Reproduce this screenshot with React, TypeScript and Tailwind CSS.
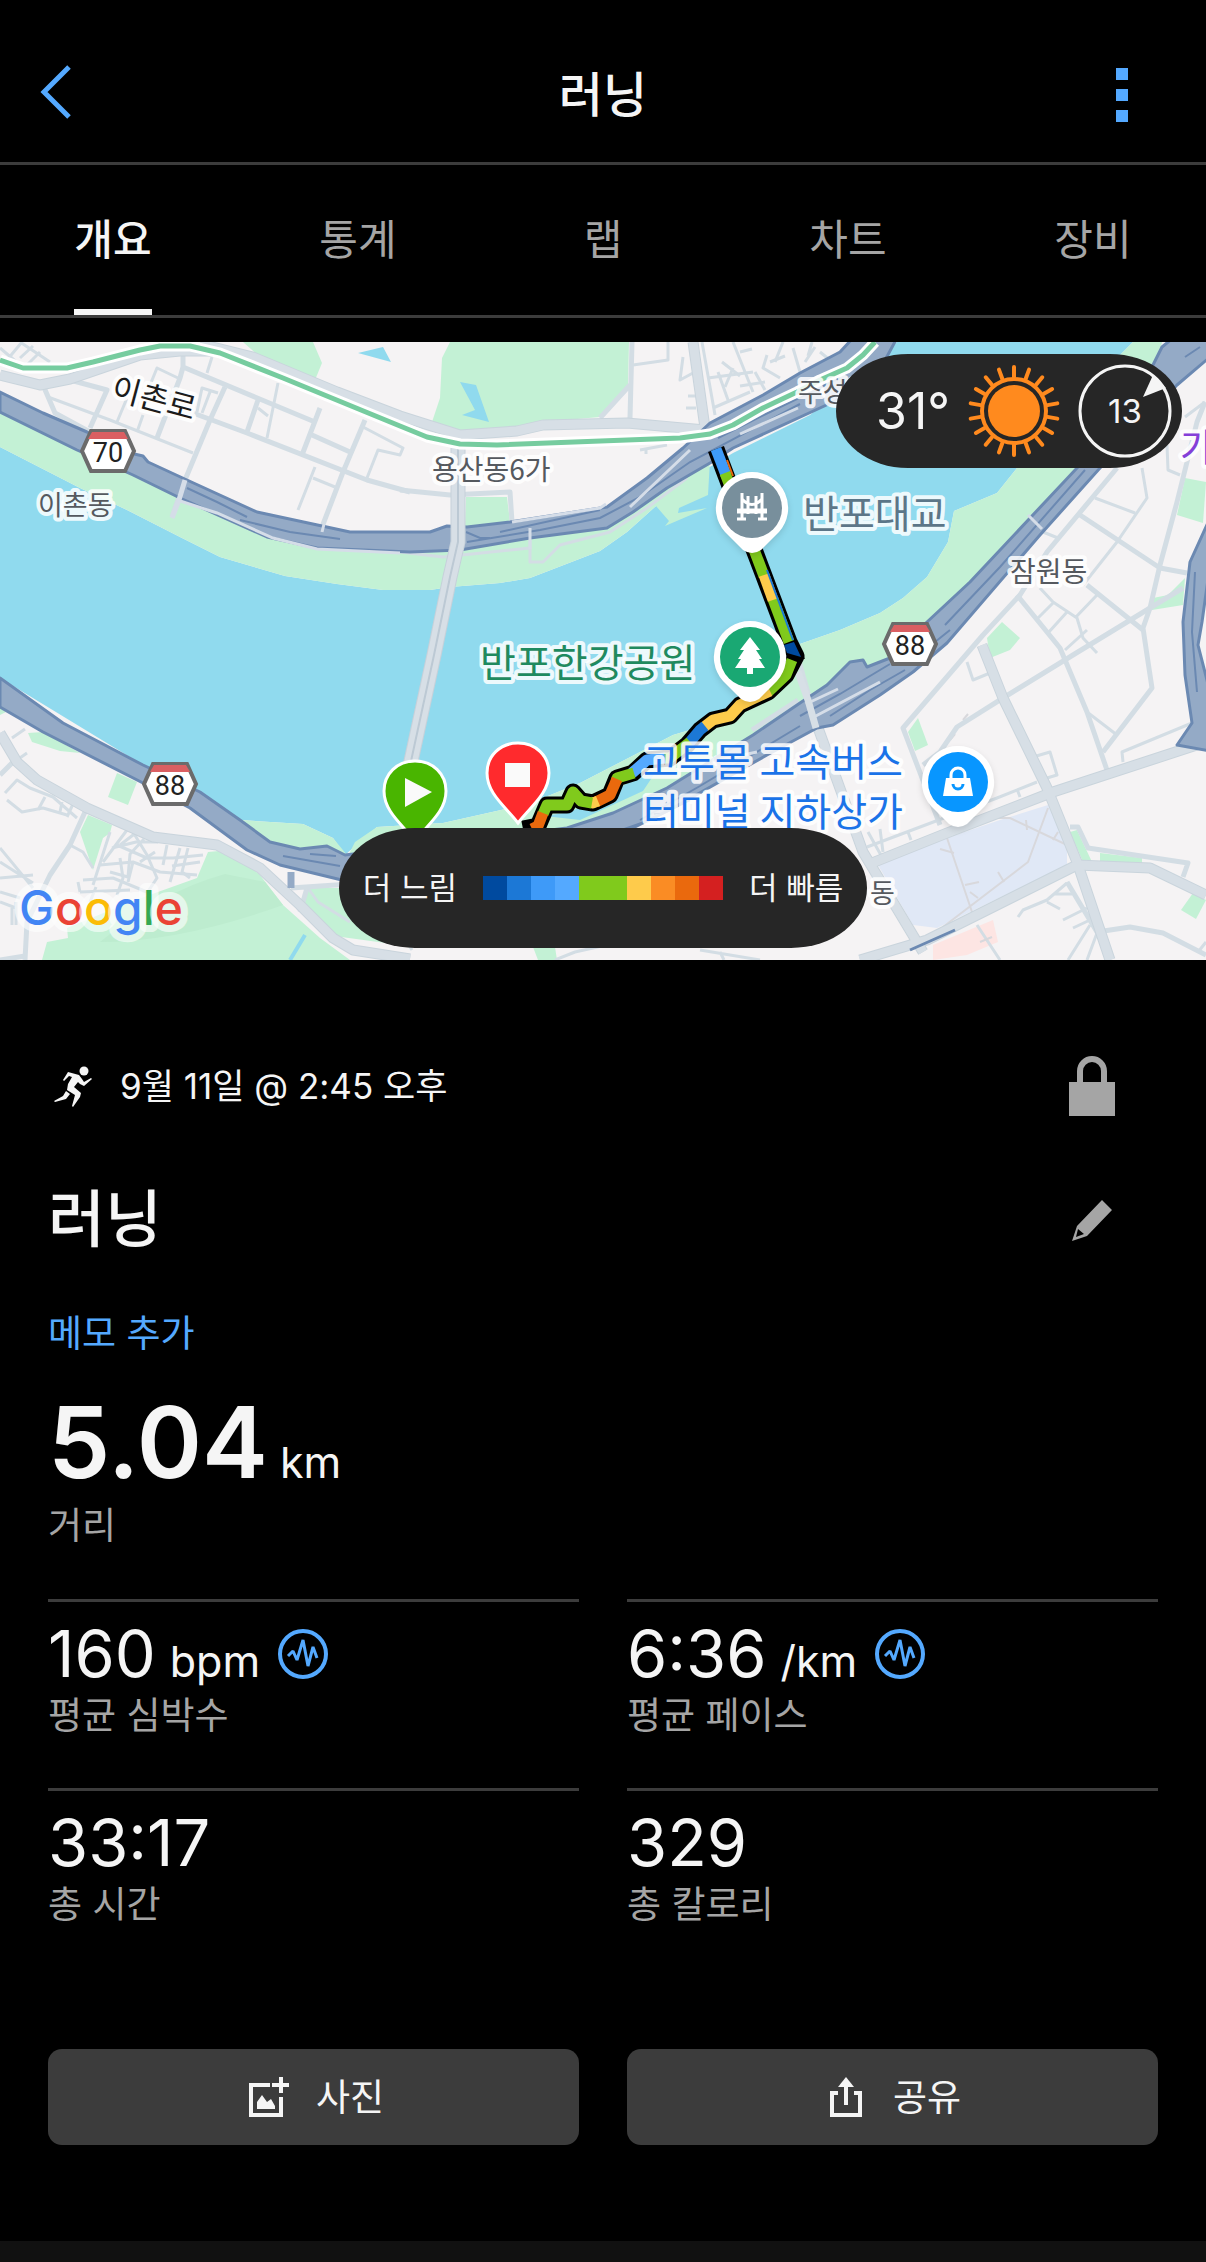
import { useState } from "react";

const TABS = ["개요", "통계", "랩", "차트", "장비"];

const PACE_COLORS = [
  "bg-[#004a9f]",
  "bg-[#1c78d6]",
  "bg-[#3e9af8]",
  "bg-[#54a9ff]",
  "bg-[#80ca1c]",
  "bg-[#80ca1c]",
  "bg-[#fecb4b]",
  "bg-[#fa8c24]",
  "bg-[#ea690d]",
  "bg-[#d42020]",
];

type Stat = {
  value: string;
  unit?: string;
  label: string;
  hasChart?: boolean;
};

const STATS: Stat[] = [
  { value: "160", unit: "bpm", label: "평균 심박수", hasChart: true },
  { value: "6:36", unit: "/km", label: "평균 페이스", hasChart: true },
  { value: "33:17", label: "총 시간" },
  { value: "329", label: "총 칼로리" },
];

const PARKS = [
  // north bank
  "0,66 133,130 267,192 410,205 607,180 710,118 708,153 679,166 678,171 707,166 665,184 669,179 656,164 627,190 600,209 530,236 500,241 450,245 430,248 383,248 337,242 285,234 220,215 180,195 127,168 80,146 0,105",
  // south bank
  "1162,0 1133,0 1120,13 1017,126 997,151 954,169 948,200 927,235 903,256 880,271 840,288 797,303 787,325 750,356 700,385 673,393 580,441 543,456 510,466 443,481 377,485 355,500 345,520 567,490 613,475 667,450 753,397 810,365 827,347 890,320 927,284 970,244 1077,130 1157,23",
  "240,478 303,482 333,496 347,513 300,510 270,504",
  "450,0 442,16 440,56 432,80 460,90 517,85 543,80 600,75 628,43 629,0",
  "243,0 260,15 315,38 322,21 313,0",
  "466,155 507,155 510,180 465,185",
  "1185,136 1206,140 1203,181 1177,173",
  "1002,280 1020,296 1010,308 990,316 987,296",
  "1153,256 1168,253 1185,236 1183,263 1152,268",
  "908,390 918,376 928,403 915,409",
  "1193,551 1206,558 1196,577 1181,568",
  "1070,490 1077,488 1092,520 1083,520",
  "1100,511 1142,516 1142,522 1100,520",
  "88,473 112,483 110,491 103,496 93,528 80,490",
  "117,431 137,440 128,463 108,455",
  "28,391 43,390 80,411 60,409 32,400",
  "42,618 47,600 68,596 67,586 130,560 197,536 208,510 230,508 260,533 283,563 320,596 350,618",
  "307,546 370,546 400,603 327,593 303,570",
  "533,605 555,605 557,618 538,618",
  "0,366 6,370 0,373",
];

const WATER = [
  "0,105 80,146 127,168 180,195 220,215 285,234 337,242 383,248 430,248 450,245 500,241 530,236 600,209 627,190 656,164 708,126 733,111 810,73 897,0 1133,0 1120,13 1017,126 997,151 954,169 948,200 927,235 903,256 880,271 840,288 797,303 787,325 750,356 700,385 673,393 580,441 543,456 510,466 443,481 377,485 345,513 333,496 303,482 240,478 200,450 143,423 0,336",
];

const PONDS = [
  "358,11 383,5 391,20",
  "460,40 476,43 489,80 462,73 475,68",
  "545,474 580,478 643,449 657,428 634,438 600,456 570,470",
];

// Closed outlines of the riverside expressways.
const HIGHWAYS = [
  "0,50 43,71 87,90 130,111 143,114 148,120 187,138 257,170 350,190 430,190 447,184 467,185 510,180 607,165 647,136 683,106 710,81 763,53 800,31 840,10 853,-4 897,-4 877,33 833,60 733,106 710,121 667,146 633,170 607,186 530,196 460,208 410,210 317,206 267,195 180,156 133,133 77,108 0,70",
  "1162,5 1173,-4 1210,-4 1210,15 1177,43 1100,126 1040,193 947,301 913,330 880,353 833,383 817,386 767,413 673,466 633,486 560,520 350,540 280,523 247,508 190,466 143,441 43,390 0,365 0,336 63,381 143,423 200,450 240,478 270,500 300,507 327,504 345,513 567,486 613,471 667,446 753,393 800,361 827,343 850,320 863,318 867,325 890,316 927,280 970,240 1077,126 1153,23",
  "1210,176 1190,220 1183,280 1185,333 1192,381 1177,403 1210,409 1210,350 1198,303 1202,280 1210,223",
];

const HIGHWAY_LINES = [
  "M187 146L217 160 247 175M240 178L290 190 340 197",
  "M467 200L540 188 600 176 640 155 690 120 800 62",
  "M490 196L480 196 466 190M500 190L600 168",
  "M945 283L1000 225 1085 128M935 300L950 288",
  "M283 514L340 524M310 512L336 514",
  "M640 478L700 444 800 384M610 492L650 478 690 458",
  "M800 374L840 352 890 322M830 374L870 348 905 328",
  "M1195 230L1192 290 1197 350",
  "M718 96L770 70 840 36M1185 15L1200 5",
];

const WIDE_ROADS = [
  "M200 2L253 15 337 50 400 74 460 93 517 89 543 83 627 81 705 88",
  "M0 33L40 43 70 37 140 13 180 9 213 9",
  "M693 0L705 86",
  "M982 303L1003 356 1047 446 1077 520 1110 618",
  "M867 523L947 491 1053 450 1206 400",
  "M817 383L863 510 923 610",
  "M860 618L927 598 1077 523 1150 526 1206 553",
  "M0 391L17 420 37 438 87 466 153 495 217 503 260 526 300 563 333 596 353 608 410 617",
];

const MID_ROADS = [
  "M43 43L55 71 90 90M70 38L107 48 90 86",
  "M183 10L183 25 180 36 157 96M183 25L315 80",
  "M225 45L210 78 185 138 172 175",
  "M193 71L247 91 367 138 410 150M258 58L247 90",
  "M320 66L302 113M312 93L350 110M365 78L343 130 322 185",
  "M400 148L450 153 510 150 512 180M632 0L630 76M600 76L630 43",
  "M1117 126L1047 210 1020 253 983 293 903 386 940 483",
  "M1080 173L1160 226 1187 231",
  "M1205 60L1197 80 1177 160 1160 223 1150 266 1143 286 1147 313 1152 346 1103 410",
  "M1087 243L1143 288M1183 246L1150 266 1073 313 1003 356 957 385 940 410 923 423",
  "M1017 253L1060 306 1087 370 1108 431",
  "M795 305L817 383M752 388L798 358",
  "M1070 485L1078 485 1088 506 1188 521 1183 535",
  "M1067 540L1097 590 1130 585 1163 591 1206 613",
  "M85 470L70 503 50 533 27 580 25 618M13 420L0 433",
  "M291 546L350 542M307 546L300 570M0 618L25 614",
];

const THIN_ROADS = [
  "M0 6L20 23M7 18L22 0M20 0L50 20M20 16L33 4M28 22L40 10",
  "M48 55L110 78 193 111M148 48L157 26 178 36M212 15L207 31M278 41L267 96",
  "M363 85L403 106 400 113 378 108 367 136M315 125L298 168M313 136L335 145",
  "M127 56L117 80M143 73L137 90M197 70L202 46 218 51M210 50L202 71M258 66L268 74",
  "M400 210L443 215 530 206 530 220 543 220 560 203 610 190 647 166 687 136",
  "M530 187L530 208",
  "M177 156L217 170 273 195 317 206 400 210",
  "M633 23L668 18 668 0M702 0L715 73M683 15L680 38 693 31M688 54L696 54M686 66L696 66",
  "M640 108L667 103M646 112L646 106M718 30L728 58M708 36L753 30M713 66L750 50",
  "M733 0L745 30 753 50M767 13L763 26 780 36M793 6L800 30M783 0L775 20M740 10L752 7",
  "M722 20L740 34M733 26L725 45M755 30L765 48M770 20L785 14M740 44L765 40",
  "M805 20L815 5M812 0L808 14M820 10L830 18",
  "M1095 156L1135 171M1142 126L1147 156 1117 200 1083 243",
  "M1167 103L1168 128 1180 133M1205 60L1185 75M1043 190L1058 196",
  "M1040 246L1053 260 1077 276 1083 296 1097 311M1053 261L1038 276M1067 270L1048 291M1097 253L1075 276M1065 308L1087 288",
  "M867 505L997 456 1037 440M967 320L973 338 990 331M1033 415L1050 410 1057 433 1047 436",
  "M1123 420L1122 410 1192 381M1087 370L1117 393M1017 447L1020 455",
  "M1018 575L1023 568 1047 558 1067 541M1063 578L1087 566M1047 560L1060 567M1055 552L1072 552M1073 586L1090 578",
  "M1090 583L1068 618M1097 591L1087 618M977 583L1000 618M1198 610L1206 600",
  "M868 490L882 515M880 487L883 510M908 490L911 498",
  "M25 387L12 396M27 411L17 418M5 451L17 438 30 446 53 455 77 476M7 458L22 470 43 466 67 473M38 468L45 455M60 470L62 460M67 475L73 462",
  "M0 506L33 546M0 536L33 533M0 550L20 556M0 520L33 541M12 566L12 583M0 560L16 566M16 560L16 583",
  "M110 490L93 543M117 503L147 516 173 516 203 513M100 523L133 520 160 530 197 533",
  "M127 488L103 520M133 490L147 513 157 536 147 551M167 503L163 523M180 506L170 540M83 538L113 536 147 550M80 550L130 548",
  "M120 516L123 536 117 553M137 490L120 503M70 503L83 510 93 526M144 497L130 512 128 535M188 506L182 530 190 536M172 524L200 520M112 506L136 500 158 500",
  "M110 530L128 535M133 520L128 540M155 510L140 520M80 550L78 540M90 560L96 545M308 546L318 560 350 580",
  "M412 608L400 590 390 590M555 618L575 610 620 600M700 608L760 618M720 610L724 618",
];

const RAILS = [
  "M947 496L972 570M943 585L1028 520 1048 466M997 476L1010 476 1067 503",
  "M940 507L954 511M965 543L979 540M998 530L1004 540M970 550L978 556M1026 478L1027 488M1053 498L1058 490",
  "M980 600L992 595M950 398L955 392M963 378L968 372",
];

const SUBWAY =
  "M0 18L23 26 67 26 93 20 140 8 160 4 190 4 220 11 283 36 400 84 427 95 460 102 497 103 680 96 710 92 733 83 763 66 797 50 820 38 847 26 863 13 875 0";

const BRIDGE = "M458 106L458 200 450 235 434 313 400 470";

const ROUTE =
  "M716 107L761 226 789 300 796 314 786 333 768 350 740 363 730 374 713 378 700 388 687 403 670 416 647 418 633 431 617 436 610 453 593 461 581 459 573 450 567 463 547 463 538 484 523 487";

const ROUTE_SEGMENTS = [
  { d: "M716 107L726 133", color: "#3e9af8" },
  { d: "M725 131L761 226 764 234", color: "#80ca1c" },
  { d: "M773 257L789 300", color: "#80ca1c" },
  { d: "M764 233L773 258", color: "#fecb4b" },
  { d: "M792 318L786 333 768 350", color: "#80ca1c" },
  { d: "M770 349L740 363 730 374 713 378 704 385", color: "#fecb4b" },
  { d: "M705 384L700 388 689 401", color: "#1c78d6" },
  { d: "M690 400L670 416 664 416", color: "#80ca1c" },
  { d: "M665 416L647 418 632 431", color: "#54a9ff" },
  { d: "M634 431L617 436 616 440", color: "#80ca1c" },
  { d: "M617 437L610 453 596 460", color: "#ea690d" },
  { d: "M598 459L593 461 590 460", color: "#fecb4b" },
  { d: "M592 461L581 459 573 450 567 463 547 463 543 472", color: "#80ca1c" },
  { d: "M543 471L538 484 532 487", color: "#ea690d" },
];

function RoadShield({ x, y, children }: { x: number; y: number; children: string }) {
  return (
    <g transform={`translate(${x} ${y})`}>
      <path d="M-17 -20H17L26 0 17 20H-17L-26 0Z" fill="#fff" stroke="#6b6b6b" strokeWidth="4" />
      <path d="M-16 -19H16L20 -12H-20Z" fill="#da5f62" />
      <text y="11" textAnchor="middle" fontSize="27" fill="#222" className="font-[Roboto]">
        {children}
      </text>
    </g>
  );
}

function PlacePin({ x, y, color, children }: { x: number; y: number; color: string; children: React.ReactNode }) {
  return (
    <g transform={`translate(${x} ${y})`} className="drop-shadow-md">
      <path d="M0 -36A36 36 0 0 1 27 24L9 42Q0 48 -9 42L-27 24A36 36 0 0 1 0 -36Z" fill="#fff" />
      <circle r="30" fill={color} />
      {children}
    </g>
  );
}

function TripMarker({ x, y, color, children }: { x: number; y: number; color: string; children: React.ReactNode }) {
  return (
    <g transform={`translate(${x} ${y})`}>
      <path
        d="M0 -31C18 -31 31 -18 31 -1C31 20 12 33 0 49C-12 33 -31 20 -31 -1C-31 -18 -18 -31 0 -31Z"
        fill={color}
        stroke="#fff"
        strokeWidth="3"
      />
      {children}
    </g>
  );
}

function MapCanvas() {
  return (
    <svg
      viewBox="0 0 1206 618"
      preserveAspectRatio="xMidYMid slice"
      className="block h-full w-full font-['Noto_Sans_CJK_KR',sans-serif]"
      role="img"
      aria-label="지도"
    >
      <rect width="1206" height="618" fill="#f5f3f4" />
      {WATER.map((points) => (
        <polygon key={points} points={points} fill="#90daee" />
      ))}
      {PARKS.map((points) => (
        <polygon key={points} points={points} fill="#c3f1d5" />
      ))}
      {PONDS.map((points) => (
        <polygon key={points} points={points} fill="#90daee" />
      ))}
      <path d="M305 593L290 618" stroke="#90daee" strokeWidth="4" />
      <path d="M100 600Q160 550 225 532L265 540 283 563Q180 600 100 600Z" fill="#bdeccf" />
      <polygon
        points="878,523 947,496 1000,478 1048,463 1067,503 1067,523 937,586 913,583"
        fill="#e0e8f6"
      />
      <polygon points="933,603 993,578 998,600 967,613 933,618" fill="#fde5e3" />

      <g fill="none" strokeLinejoin="round">
        {THIN_ROADS.map((d) => (
          <path key={d} d={d} stroke="#d3dde4" strokeWidth="3" />
        ))}
        {RAILS.map((d) => (
          <path key={d} d={d} stroke="#d8d8dc" strokeWidth="2" />
        ))}
        {MID_ROADS.map((d) => (
          <path key={d} d={d} stroke="#d3dde4" strokeWidth="5" />
        ))}
        {WIDE_ROADS.map((d) => (
          <path key={d} d={d} stroke="#c9d4dc" strokeWidth="11" />
        ))}
        {WIDE_ROADS.map((d) => (
          <path key={d} d={d} stroke="#d7dfe6" strokeWidth="9" />
        ))}
      </g>

      {HIGHWAYS.map((points) => (
        <polygon
          key={points}
          points={points}
          fill="#94aac6"
          stroke="#6b89b2"
          strokeWidth="3"
          strokeLinejoin="round"
        />
      ))}
      <g fill="none" stroke="#6b89b2" strokeWidth="2">
        {HIGHWAY_LINES.map((d) => (
          <path key={d} d={d} />
        ))}
        <path d="M291 530V546" stroke="#94aac6" strokeWidth="7" />
        <path d="M453 145V225M910 608L955 588" strokeWidth="3" />
      </g>
      <g fill="none" stroke="#d5dde8" strokeWidth="3">
        <path d="M185 138L179 158 172 176" strokeWidth="5" />
        <path d="M177 158L217 171 273 196 317 207 400 211" />
        <path d="M324 182L322 190M530 186V207M1028 173L1042 187" />
        <path d="M512 180L600 166 606 162M690 108L630 165M798 66L740 92" />
        <path d="M806 362L838 347M812 376L880 340M757 410L720 418" />
      </g>

      {/* Dongjak bridge */}
      <path d={BRIDGE} fill="none" stroke="#c6d1da" strokeWidth="15" />
      <path d={BRIDGE} fill="none" stroke="#d7dfe6" strokeWidth="13" />
      <path d={BRIDGE} fill="none" stroke="#bcc9d4" strokeWidth="2" />
      <path d="M798 330L808 358 816 386" fill="none" stroke="#d7dfe6" strokeWidth="7" />

      <g fill="none" strokeLinejoin="round">
        <path d={SUBWAY} stroke="#fff" strokeWidth="11" />
        <path d={SUBWAY} stroke="#76cc9f" strokeWidth="5" />
      </g>

      <g fill="none">
        <path d={ROUTE} stroke="#000" strokeWidth="17" strokeLinejoin="round" />
        <path d="M792 290L805 317 786 313Z" fill="#000" />
        {ROUTE_SEGMENTS.map((segment) => (
          <path key={segment.d} d={segment.d} stroke={segment.color} strokeWidth="11" strokeLinejoin="round" />
        ))}
        <path d="M784 303L794 300 801 315 787 311Z" fill="#004a9f" />
        <path d="M727 118L733 134" stroke="#ea690d" strokeWidth="2" />
        <path d="M767 228L793 298" stroke="#1c78d6" strokeWidth="2" />
      </g>

      <g stroke="#fff" strokeOpacity="0.85" strokeWidth="8" strokeLinejoin="round" paintOrder="stroke">
        <text x="110" y="56" fontSize="31" fill="#1b1b1b" transform="rotate(15 110 56)">
          이촌로
        </text>
        <text x="38" y="173" fontSize="27" fill="#55595f">
          이촌동
        </text>
        <text x="432" y="138" fontSize="28" fill="#55595f">
          용산동6가
        </text>
        <text x="798" y="60" fontSize="27" fill="#55595f">
          주성동
        </text>
        <text x="1010" y="240" fontSize="28" fill="#55595f">
          잠원동
        </text>
        <text x="870" y="561" fontSize="27" fill="#55595f">
          동
        </text>
        <text x="803" y="186" fontSize="39" fill="#5c7688">
          반포대교
        </text>
        <text x="480" y="335" fontSize="39" fill="#1f8a5f">
          반포한강공원
        </text>
        <text x="643" y="434" fontSize="39" fill="#1a73e8">
          고투몰 고속버스
        </text>
        <text x="643" y="484" fontSize="39" fill="#1a73e8">
          터미널 지하상가
        </text>
        <text x="1180" y="119" fontSize="38" fill="#8440d8">
          가
        </text>
      </g>

      <RoadShield x={108} y={109}>70</RoadShield>
      <RoadShield x={910} y={302}>88</RoadShield>
      <RoadShield x={170} y={442}>88</RoadShield>

      <PlacePin x={752} y={166} color="#788f9c">
        <g fill="none" stroke="#fff" strokeWidth="3">
          <path d="M-10 -15V10M-4 -12V6M4 -12V6M10 -15V10M-10 -9Q0 2 10 -9" />
          <path d="M-15 3H15" strokeWidth="5" />
          <path d="M-15 11H-6M6 11H15" />
        </g>
      </PlacePin>
      <PlacePin x={750} y={315} color="#1aa873">
        <path d="M0 -20L10 -7H6L12 2H9L15 11H3V17H-3V11H-15L-9 2H-12L-6 -7H-10Z" fill="#fff" />
      </PlacePin>
      <PlacePin x={958} y={440} color="#0896ff">
        <path d="M-12 -4H12L15 14H-15Z" fill="#fff" />
        <path d="M-7 -3V-7A7 7 0 0 1 7 -7V-3" fill="none" stroke="#fff" strokeWidth="3" />
        <path d="M-5 2A5 5 0 0 0 5 2" fill="none" stroke="#0896ff" strokeWidth="3" />
      </PlacePin>
      <TripMarker x={415} y={450} color="#49b500">
        <path d="M-10 -14L17 0 -10 15Z" fill="#fafafa" />
      </TripMarker>
      <TripMarker x={518} y={432} color="#ff2a2d">
        <rect x="-13" y="-11" width="25" height="24" fill="#fafafa" />
      </TripMarker>

      <text
        x="19"
        y="583"
        fontSize="48"
        stroke="#fff"
        strokeOpacity="0.6"
        strokeWidth="14"
        strokeLinejoin="round"
        paintOrder="stroke"
        className="font-[Inter] font-medium"
      >
        <tspan fill="#4285f4">G</tspan>
        <tspan fill="#ea4335">o</tspan>
        <tspan fill="#fbbc05">o</tspan>
        <tspan fill="#4285f4">g</tspan>
        <tspan fill="#34a853">l</tspan>
        <tspan fill="#ea4335">e</tspan>
      </text>
    </svg>
  );
}

function SunIcon() {
  const rays = Array.from({ length: 18 }, (_, i) => i * 20);
  return (
    <svg viewBox="-47 -47 94 94" className="size-[94px]" aria-hidden="true">
      <circle r="26" fill="#ff8a1e" />
      <g fill="none" stroke="#ff8a1e" strokeWidth="4" strokeLinecap="round">
        <circle r="32" />
        {rays.map((angle) => (
          <path key={angle} d="M0 -34V-44" transform={`rotate(${angle})`} />
        ))}
      </g>
    </svg>
  );
}

function WeatherPill() {
  return (
    <div className="absolute top-3 right-6 flex h-[114px] w-[346px] items-center rounded-[72px/57px] bg-[#262626] pr-2.5 pl-10 text-[#f5f5f5]">
      <span className="text-[50px] leading-none">31°</span>
      <div className="ml-auto flex items-center gap-[17px]">
        <SunIcon />
        <div className="relative flex size-[94px] items-center justify-center">
          <svg viewBox="-47 -47 94 94" className="absolute inset-0" aria-hidden="true">
            <circle r="45" fill="none" stroke="#f5f5f5" strokeWidth="3" />
            <path d="M28 -36L41 -23 18 -14Z" fill="#f5f5f5" />
          </svg>
          <span className="relative text-[33px] leading-none">13</span>
        </div>
      </div>
    </div>
  );
}

function PaceLegend() {
  return (
    <div className="absolute inset-x-0 bottom-3 flex justify-center">
      <div className="flex h-[120px] items-center gap-[26px] rounded-[76px/60px] bg-[#262626] px-6 text-[31px] text-[#f5f5f5]">
        <span>더 느림</span>
        <div className="flex">
          {PACE_COLORS.map((color, index) => (
            <span key={index} className={`h-6 w-6 ${color}`} />
          ))}
        </div>
        <span>더 빠름</span>
      </div>
    </div>
  );
}

function PulseIcon() {
  return (
    <svg viewBox="0 0 50 50" className="size-[50px]" fill="none" stroke="#54a9ff" aria-hidden="true">
      <circle cx="25" cy="25" r="23" strokeWidth="4" />
      <path d="M10 27L15 22 19 31 25 11 30 37 35 18 39 29" strokeWidth="3" strokeLinejoin="bevel" />
    </svg>
  );
}

function RunnerIcon() {
  return (
    <svg viewBox="0 0 38 41" className="h-[41px] w-[38px]" fill="#f5f5f5" aria-hidden="true">
      <circle cx="30" cy="5" r="4.5" />
      <path d="M14 6L25 9 28 13 30 16 37 12 38 13 30 20 26 18 24 16 20 21 27 27 26 31 19 41 18 40 21 29 13 24 14 18 18 11 15 10 10 15 9 14Z" />
      <path d="M12 25L16 28 12 33 1 36 0 35 9 30Z" />
    </svg>
  );
}

export default function App() {
  const [activeTab, setActiveTab] = useState("개요");

  return (
    <div className="flex min-h-screen flex-col bg-black font-[Inter,'Noto_Sans_CJK_KR',sans-serif] text-[#f5f5f5]">
      <header className="grid h-[165px] grid-cols-[1fr_auto_1fr] items-center border-b-3 border-[#3c3c3c] pt-7">
        <button type="button" aria-label="뒤로" className="ml-10 justify-self-start">
          <svg viewBox="0 0 32 60" className="h-[60px] w-8" fill="none" stroke="#54a9ff" strokeWidth="5">
            <path d="M29 2L4 27 29 52" />
          </svg>
        </button>
        <h1 className="text-[48px] leading-none font-medium">러닝</h1>
        <button type="button" aria-label="더 보기" className="mr-[78px] flex flex-col gap-[9px] justify-self-end">
          <span className="size-3 bg-[#54a9ff]" />
          <span className="size-3 bg-[#54a9ff]" />
          <span className="size-3 bg-[#54a9ff]" />
        </button>
      </header>

      <nav className="flex h-[153px] justify-between border-b-3 border-[#3c3c3c] px-[74px]">
        {TABS.map((tab) => (
          <button
            key={tab}
            type="button"
            onClick={() => setActiveTab(tab)}
            className={
              tab === activeTab
                ? "w-[78px] border-y-6 border-t-transparent border-b-[#f5f5f5] text-[42px] leading-none font-medium whitespace-nowrap"
                : "w-[78px] border-y-6 border-transparent text-[42px] leading-none whitespace-nowrap text-[#a5a5a5]"
            }
          >
            {tab}
          </button>
        ))}
      </nav>

      <section className="relative mt-6 h-[618px] overflow-hidden">
        <MapCanvas />
        <WeatherPill />
        <PaceLegend />
      </section>

      <main className="flex-1 px-12 pt-24">
        <div className="flex h-[60px] items-center">
          <div className="ml-1.5">
            <RunnerIcon />
          </div>
          <p className="ml-7 text-[35px] leading-none">9월 11일 @ 2:45 오후</p>
          <button type="button" aria-label="개인정보 설정" className="mr-[43px] ml-auto">
            <svg viewBox="0 0 46 60" className="h-[60px] w-[46px]" aria-hidden="true">
              <rect y="26" width="46" height="34" fill="#a5a5a5" />
              <path d="M11 28V15A12 12 0 0 1 35 15V28" fill="none" stroke="#a5a5a5" strokeWidth="6" />
            </svg>
          </button>
        </div>

        <div className="mt-[72px] flex h-[64px] items-center justify-between">
          <h2 className="text-[62px] leading-none font-medium">러닝</h2>
          <button type="button" aria-label="이름 편집" className="mr-[46px]">
            <svg viewBox="0 0 40 41" className="h-[41px] w-10" aria-hidden="true">
              <path d="M30 0L40 10 15 36 0 41 5 26ZM6 29L4 37 12 34Z" fill="#a5a5a5" fillRule="evenodd" />
            </svg>
          </button>
        </div>

        <a href="#memo" className="mt-[62px] block text-[37px] leading-[40px] text-[#54a9ff]">
          메모 추가
        </a>

        <p className="mt-[38px] flex h-[100px] items-baseline gap-3 leading-[100px]">
          <span className="text-[99px] font-semibold">5.04</span>
          <span className="text-[43px]">km</span>
        </p>
        <p className="mt-[14px] text-[37px] leading-[40px] text-[#a5a5a5]">거리</p>

        <div className="mt-[53px] grid grid-cols-2 gap-x-12">
          {STATS.map((stat) => (
            <div key={stat.label} className="h-[189px] border-t-3 border-[#3c3c3c] pt-[18px]">
              <div className="flex h-[68px] items-center">
                <p className="flex h-[68px] items-baseline gap-3.5 leading-[68px]">
                  <span className="text-[65px]">{stat.value}</span>
                  {stat.unit ? <span className="text-[43px]">{stat.unit}</span> : null}
                </p>
                {stat.hasChart ? (
                  <button type="button" aria-label={`${stat.label} 차트`} className="ml-[18px]">
                    <PulseIcon />
                  </button>
                ) : null}
              </div>
              <p className="mt-[8px] text-[37px] leading-[40px] text-[#a5a5a5]">{stat.label}</p>
            </div>
          ))}
        </div>

        <div className="mt-[72px] grid grid-cols-2 gap-x-12">
          <button
            type="button"
            className="flex h-24 items-center justify-center gap-[27px] rounded-[14px] bg-[#3c3c3c] pl-1.5 text-[37px] leading-none"
          >
            <svg viewBox="0 0 40 40" className="size-10" fill="none" stroke="#f5f5f5" strokeWidth="4" aria-hidden="true">
              <path d="M21 8H2V38H32V20" />
              <path d="M32 0V16M23 8H40" />
              <path d="M8 32V25L13 18 18 25 22 22 26 29V32Z" fill="#f5f5f5" stroke="none" />
            </svg>
            사진
          </button>
          <button
            type="button"
            className="flex h-24 items-center justify-center gap-[31px] rounded-[14px] bg-[#3c3c3c] pl-1.5 text-[37px] leading-none"
          >
            <svg viewBox="0 0 32 40" className="h-10 w-8" fill="none" stroke="#f5f5f5" strokeWidth="4" aria-hidden="true">
              <path d="M8 16H2V38H30V16H24M16 6V28" />
              <path d="M16 0L24 10H8Z" fill="#f5f5f5" stroke="none" />
            </svg>
            공유
          </button>
        </div>
      </main>

      <footer className="h-[21px] bg-[#111]" />
    </div>
  );
}
